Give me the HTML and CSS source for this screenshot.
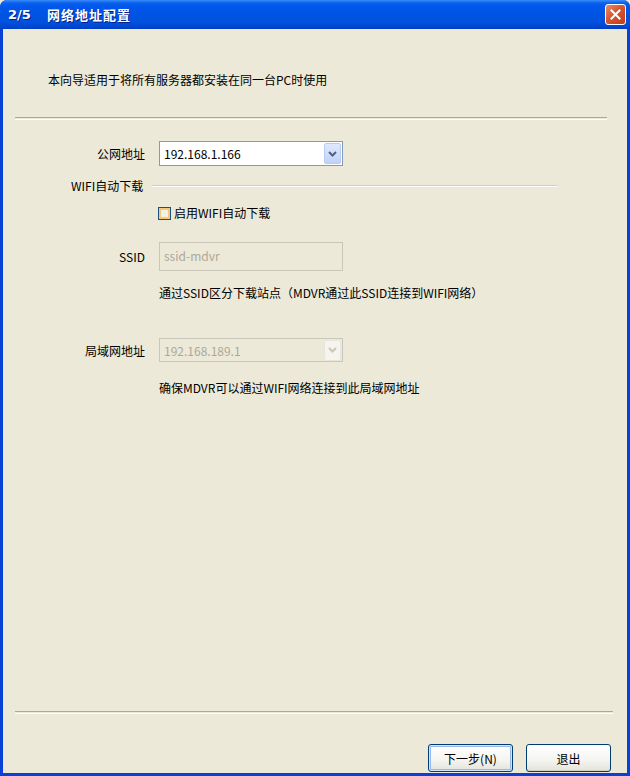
FILE: index.html
```html
<!DOCTYPE html>
<html lang="zh-CN">
<head>
  <meta charset="UTF-8" />
  <title>网络地址配置</title>
  <link rel="stylesheet" href="styles.css">
</head>
<body>
  <div class="window">
    <div class="titlebar">
      <span class="titlebar__step">2/5</span>
      <span class="titlebar__text">网络地址配置</span>
      <span class="titlebar__close">
        <svg width="11" height="11" viewBox="0 0 11 11">
          <path d="M1.5 1.5 L9.5 9.5 M9.5 1.5 L1.5 9.5" stroke="#fff" stroke-width="2" stroke-linecap="square"/>
        </svg>
      </span>
    </div>

    <div class="client">
      <p class="intro">本向导适用于将所有服务器都安装在同一台PC时使用</p>
      <div class="sep sep--top"></div>

      <div class="form">
        <div class="row row--wan">
          <span class="row__label">公网地址</span>
          <div class="combo">
            <span class="combo__value">192.168.1.166</span>
            <span class="combo__btn">
              <svg width="9" height="6" viewBox="0 0 9 6"><path d="M1 1 L4.5 4.5 L8 1" fill="none" stroke="#4D6185" stroke-width="2"/></svg>
            </span>
          </div>
        </div>

        <div class="group">
          <span class="group__title">WIFI自动下载</span>
          <span class="group__line"></span>
        </div>

        <label class="check">
          <span class="check__box"></span>
          <span>启用WIFI自动下载</span>
        </label>

        <div class="row row--ssid">
          <span class="row__label">SSID</span>
          <div class="edit edit--disabled">ssid-mdvr</div>
        </div>
        <p class="hint hint--ssid">通过SSID区分下载站点（MDVR通过此SSID连接到WIFI网络）</p>

        <div class="row row--lan">
          <span class="row__label">局域网地址</span>
          <div class="combo combo--disabled">
            <span class="combo__value">192.168.189.1</span>
            <span class="combo__btn">
              <svg width="9" height="6" viewBox="0 0 9 6"><path d="M1 1 L4.5 4.5 L8 1" fill="none" stroke="#C9C7BA" stroke-width="2"/></svg>
            </span>
          </div>
        </div>
        <p class="hint hint--lan">确保MDVR可以通过WIFI网络连接到此局域网地址</p>
      </div>

      <div class="sep sep--bottom"></div>
      <div class="buttons">
        <span class="btn btn--default">下一步(N)</span>
        <span class="btn">退出</span>
      </div>
    </div>
  </div>
</body>
</html>
```

FILE: styles.css
```css
html, body {
  margin: 0;
  height: 100%;
}

body {
  font-family: "Noto Sans CJK SC", "Liberation Sans", sans-serif;
  font-size: 12px;
  color: #000;
  background: #ECE9D8;
}

.window {
  width: 630px;
  height: 776px;
  box-sizing: border-box;
  display: flex;
  flex-direction: column;
  background: #0A3FD8;
  border-radius: 7px 7px 0 0;
  overflow: hidden;
}

/* синяя шапка окна */
.titlebar {
  height: 29px;
  flex-shrink: 0;
  display: flex;
  align-items: center;
  padding: 0 4px 0 8px;
  background: linear-gradient(#3A8CFF 0, #0A61E8 3px, #0058EE 6px, #0054E3 14px, #0052DD 22px, #0048D0 26px, #003DC4 29px);
  color: #fff;
  font-weight: bold;
  text-shadow: 1px 1px 0 #0A1E88;
}

.titlebar__step {
  font-family: "DejaVu Sans", sans-serif;
  font-size: 13px;
  width: 39px;
}

.titlebar__text {
  font-size: 13px;
  letter-spacing: 1px;
  flex: 1;
}

.titlebar__close {
  width: 19px;
  height: 19px;
  display: flex;
  align-items: center;
  justify-content: center;
  border: 1px solid #fff;
  border-radius: 3px;
  background: linear-gradient(135deg, #E88B6F 0%, #D8562F 45%, #C43C17 100%);
}

.client {
  flex: 1;
  display: flex;
  flex-direction: column;
  margin: 0 3px 3px 3px;
  background: #ECE9D8;
}

.intro {
  margin: 43px 0 0 45px;
  line-height: 16px;
}

.sep {
  height: 1px;
  border-top: 1px solid #ACA899;
  border-bottom: 1px solid #fff;
  flex-shrink: 0;
}

.sep--top {
  margin: 29px 20px 0 12px;
}

.sep--bottom {
  margin: auto 14px 0 12px;
}

.row {
  display: flex;
  align-items: center;
}

.row__label {
  width: 142px;
  margin-right: 14px;
  text-align: right;
}

.row--wan {
  margin-top: 21px;
}

.row--ssid {
  margin-top: 21px;
}

.row--lan {
  margin-top: 37px;
}

.combo {
  width: 184px;
  height: 25px;
  box-sizing: border-box;
  border: 1px solid #7F9DB9;
  background: #fff;
  display: flex;
  align-items: center;
  padding: 1px;
}

.combo__value {
  flex: 1;
  padding-left: 3px;
}

.combo__btn {
  width: 15px;
  height: 19px;
  display: flex;
  align-items: center;
  justify-content: center;
  border: 1px solid #B9CBF3;
  border-radius: 2px;
  background: linear-gradient(#E0E9FD, #C0D2F9);
}

.combo--disabled {
  height: 24px;
  border-color: #C9C7BA;
  background: #ECE9D8;
  color: #ACA899;
}

.combo--disabled .combo__btn {
  border-color: #E8E6DC;
  background: #F5F4EE;
}

.group {
  display: flex;
  align-items: center;
  margin: 12px 70px 0 68px;
  line-height: 16px;
}

.group__title {
  margin-right: 9px;
}

.group__line {
  flex: 1;
  height: 0;
  border-top: 1px solid #D0D0BF;
  border-bottom: 1px solid #fff;
}

.check {
  display: flex;
  align-items: center;
  margin: 11px 0 0 155px;
  line-height: 16px;
}

.check__box {
  width: 11px;
  height: 11px;
  border: 1px solid #1C5180;
  background: #F3F1E6;
  box-shadow: inset 0 0 0 2px #F6C97A;
  margin-right: 3px;
}

.edit {
  width: 184px;
  height: 29px;
  box-sizing: border-box;
  border: 1px solid #ACA899;
  padding: 4px 4px;
  line-height: 18px;
}

.edit--disabled {
  color: #ACA899;
  background: #ECE9D8;
  border-color: #C9C7BA;
}

.hint {
  margin: 14px 0 0 156px;
  line-height: 16px;
}

.hint--lan {
  margin-top: 18px;
}

.buttons {
  display: flex;
  justify-content: flex-end;
  gap: 13px;
  margin: 30px 16px 1px 0;
}

.btn {
  width: 85px;
  height: 28px;
  box-sizing: border-box;
  display: flex;
  align-items: center;
  justify-content: center;
  border: 1px solid #003C74;
  border-radius: 3px;
  background: linear-gradient(#FFFFFF, #F4F4F0 60%, #E3E2DA);
  box-shadow: inset 0 -1px 0 #D6D0C5;
}

.btn--default {
  box-shadow: inset 0 0 0 1px #CEE7FF, inset 0 0 0 2px #98B8EA;
}
```
